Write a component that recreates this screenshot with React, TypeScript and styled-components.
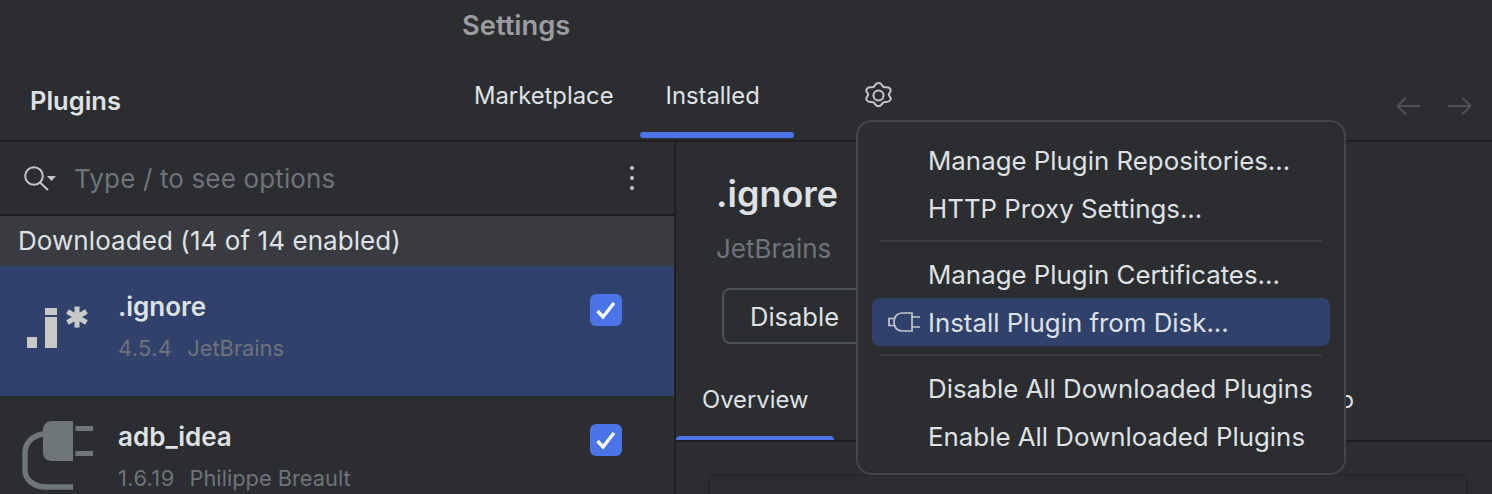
import React from "react";
import styled, { createGlobalStyle } from "styled-components";

const GlobalStyle = createGlobalStyle`
    html, body {
        margin: 0;
        padding: 0;
        background-color: #2b2d30;
    }
    * {
        box-sizing: border-box;
    }
`

const Page = styled.div`
    position: relative;
    width: 1492px;
    height: 494px;
    overflow: hidden;
    background-color: #2b2d30;
    color: #dfe1e5;
    font-family: Inter, "Liberation Sans", sans-serif;
    font-size: 23.8px;
`

const TitleBar = styled.div`
    height: 48px;
    padding-left: 462px;
    display: flex;
    align-items: center;
    padding-top: 2px;
    font-size: 27.3px;
    font-weight: 600;
    color: #9b9c9f;
`

const Header = styled.div`
    height: 94px;
    border-bottom: 2px solid #1e1f22;
    display: flex;
    padding-left: 30px;
`

const HeaderTitle = styled.div`
    width: 418px;
    padding-top: 38px;
    font-size: 25.5px;
    line-height: 30px;
    font-weight: 600;
`

const HeaderTab = styled.div<{ $active?: boolean }>`
    position: relative;
    height: 92px;
    padding: 33px ${(p) => (p.$active ? "34px" : "26px")} 0 26px;
    line-height: 30px;
    &::after {
        content: "";
        display: ${(p) => (p.$active ? "block" : "none")};
        position: absolute;
        left: 0;
        right: 0;
        bottom: 2px;
        height: 6px;
        border-radius: 4px;
        background-color: #4a74e8;
    }
`

const HeaderIcons = styled.div`
    flex: 1;
    display: flex;
    justify-content: space-between;
    padding: 34px 20px 0 71px;
`

const NavArrows = styled.div`
    display: flex;
    gap: 28px;
    padding-top: 14px;
    color: #4f5156;
`

const Body = styled.div`
    display: flex;
    height: 352px;
`

const LeftPanel = styled.div`
    width: 676px;
    flex-shrink: 0;
    border-right: 2px solid #1e1f22;
`

const SearchRow = styled.div`
    height: 74px;
    padding: 0 39px 0 24px;
    display: flex;
    align-items: center;
    border-bottom: 2px solid #1e1f22;
`

const SearchText = styled.div`
    flex: 1;
    margin-left: 18px;
    font-size: 26px;
    letter-spacing: 0.15px;
    color: #6f737a;
`

const GroupHeader = styled.div`
    height: 50px;
    padding: 0 0 1px 18px;
    display: flex;
    align-items: center;
    font-size: 26px;
    letter-spacing: 0.07px;
    background-color: #393b40;
`

const PluginRow = styled.div<{ $selected?: boolean }>`
    height: 130px;
    padding: 26px 52px 0 14px;
    display: flex;
    align-items: flex-start;
    background-color: ${(p) => (p.$selected ? "#30426b" : "transparent")};
`

const PluginIconBox = styled.div`
    width: 104px;
    margin-top: -2px;
    flex-shrink: 0;
`

const PluginText = styled.div`
    flex: 1;
`

const PluginName = styled.div`
    line-height: 30px;
    font-size: 26px;
    font-weight: 600;
`

const PluginMeta = styled.div`
    margin-top: 11px;
    line-height: 30px;
    font-size: 21.8px;
    color: #6f737a;
    display: flex;
    gap: 15px;
`

const PluginVersion = styled.span`
    letter-spacing: 0.4px;
`

const CheckBox = styled.div`
    width: 32px;
    height: 32px;
    margin-top: 2px;
    border-radius: 6px;
    background-color: #4a74e8;
    display: flex;
    align-items: center;
    justify-content: center;
`

const DetailPanel = styled.div`
    flex: 1;
`

const DetailName = styled.div`
    padding: 31px 0 0 40px;
    font-size: 36px;
    line-height: 42px;
    font-weight: 600;
`

const DetailVendor = styled.div`
    padding: 19px 0 0 40px;
    line-height: 30px;
    font-size: 26px;
    color: #6f737a;
`

const DisableButton = styled.div`
    width: 200px;
    height: 56px;
    margin: 24px 0 0 46px;
    padding-left: 26px;
    display: flex;
    align-items: center;
    font-size: 25.5px;
    border: 2px solid #4e5157;
    border-radius: 8px;
`

const DetailTabs = styled.div`
    height: 98px;
    padding-right: 112px;
    border-bottom: 2px solid #1e1f22;
    display: flex;
    justify-content: space-between;
`

const DetailTab = styled.div<{ $active?: boolean }>`
    position: relative;
    height: 96px;
    padding: 41px 26px 0;
    line-height: 30px;
    &::after {
        content: "";
        display: ${(p) => (p.$active ? "block" : "none")};
        position: absolute;
        left: 0;
        right: 0;
        bottom: 0;
        height: 4px;
        border-radius: 4px 4px 0 0;
        background-color: #4a74e8;
    }
`

const DescriptionBox = styled.div`
    width: 760px;
    height: 100px;
    margin: 32px 0 0 32px;
    border: 2px solid #26282b;
    border-radius: 8px;
`

const Menu = styled.div`
    position: absolute;
    left: 856px;
    top: 120px;
    width: 490px;
    height: 355px;
    padding: 14px;
    font-size: 25.85px;
    background-color: #2b2d30;
    border: 2px solid #43454a;
    border-radius: 16px;
`

const MenuItem = styled.div<{ $active?: boolean }>`
    height: 48px;
    padding-left: 16px;
    display: flex;
    align-items: center;
    border-radius: 8px;
    background-color: ${(p) => (p.$active ? "#30426b" : "transparent")};
`

const MenuIcon = styled.div`
    width: 40px;
    flex-shrink: 0;
    display: flex;
`

const MenuSeparator = styled.div`
    height: 2px;
    margin: 8px;
    background-color: #393b40;
`

const GearIcon = () => (
    <svg width="27" height="27" viewBox="2.75 0.5 22.5 27" preserveAspectRatio="none" fill="none" stroke="#c4c6cb" strokeLinejoin="round">
        <path vectorEffect="non-scaling-stroke" strokeWidth="2" d="M14 1.5c1.2 0 2.1.7 2.7 1.8l.7 1.3c.4.7 1.1 1.1 1.9 1.1h1.5c1.3 0 2.3.6 2.9 1.7.6 1 .6 2.2 0 3.3l-.8 1.3c-.4.7-.4 1.5 0 2.2l.8 1.3c.6 1.1.6 2.3 0 3.3-.6 1.1-1.6 1.7-2.9 1.7h-1.5c-.8 0-1.5.4-1.9 1.1l-.7 1.3c-.6 1.1-1.5 1.8-2.7 1.8s-2.1-.7-2.7-1.8l-.7-1.3c-.4-.7-1.1-1.1-1.9-1.1H7.2c-1.3 0-2.3-.6-2.9-1.7-.6-1-.6-2.2 0-3.3l.8-1.3c.4-.7.4-1.5 0-2.2l-.8-1.3c-.6-1.1-.6-2.3 0-3.3.6-1.1 1.6-1.7 2.9-1.7h1.5c.8 0 1.5-.4 1.9-1.1l.7-1.3c.6-1.1 1.5-1.8 2.7-1.8z" />
        <ellipse vectorEffect="non-scaling-stroke" strokeWidth="2" cx="14" cy="14" rx="4.2" ry="5" />
    </svg>
)

const Arrow = ({ flip }: { flip?: boolean }) => (
    <svg width="24" height="20" viewBox="0 0 24 20" fill="none" stroke="currentColor" strokeWidth="2" style={flip ? { transform: "scaleX(-1)" } : undefined}>
        <path d="M24 10H2M10 1.5L1.5 10l8.5 8.5" />
    </svg>
)

const SearchIcon = () => (
    <svg width="32" height="26" viewBox="0 0 32 26" fill="none">
        <circle cx="10" cy="11" r="8.8" stroke="#c4c6cb" strokeWidth="2" />
        <path d="M16 17.5l8 7.5" stroke="#c4c6cb" strokeWidth="2" />
        <path d="M23 11h9l-4.5 5z" fill="#c4c6cb" />
    </svg>
)

const MoreIcon = () => (
    <svg width="6" height="26" viewBox="0 0 6 26" fill="#c4c6cb">
        <circle cx="3" cy="3" r="2" />
        <circle cx="3" cy="13" r="2" />
        <circle cx="3" cy="23" r="2" />
    </svg>
)

const CheckIcon = () => (
    <svg width="24" height="24" viewBox="0 0 24 24" fill="none" stroke="#fff" strokeWidth="3.4">
        <path d="M3.5 13l5.5 6L20 5" />
    </svg>
)

const IgnoreIcon = () => (
    <svg width="84" height="74" viewBox="0 0 84 74" fill="#c9c9c9">
        <rect x="13" y="47" width="10" height="11" />
        <rect x="31" y="18" width="12" height="7" />
        <rect x="31" y="27" width="12" height="31" />
        <path d="M63 16.5v21M53.5 21.5l19 11M72.5 21.5l-19 11" stroke="#c9c9c9" strokeWidth="5" />
    </svg>
)

const AdbIcon = () => (
    <svg width="84" height="74" viewBox="0 0 84 74" fill="#6e767a">
        <path d="M59 1H38C32 1 29 5 29 10V32C29 37 32 41 38 41H59z" />
        <rect x="61.5" y="6" width="17.5" height="5" />
        <rect x="61.5" y="31" width="17.5" height="5" />
        <path d="M29 14C17 16 11 24 11 33V50C11 60 20 67 32 67H59" fill="none" stroke="#6e767a" strokeWidth="5.5" />
    </svg>
)

const PlugIcon = () => (
    <svg width="32" height="20" viewBox="0 0 32 20" fill="none" stroke="#c4c6cb" strokeWidth="1.7">
        <path d="M24 1H14C9 1 6 5 6 10s3 9 8 9h10z" />
        <path d="M6 6.5H1v7h5M24 5h8M24 15h8" />
    </svg>
)

const plugins = [
    { name: ".ignore", version: "4.5.4", vendor: "JetBrains", icon: <IgnoreIcon />, selected: true },
    { name: "adb_idea", version: "1.6.19", vendor: "Philippe Breault", icon: <AdbIcon />, selected: false },
]

const App = () => {
    return (
        <Page>
            <GlobalStyle />
            <TitleBar>Settings</TitleBar>
            <Header>
                <HeaderTitle>Plugins</HeaderTitle>
                <HeaderTab>Marketplace</HeaderTab>
                <HeaderTab $active>Installed</HeaderTab>
                <HeaderIcons>
                    <GearIcon />
                    <NavArrows>
                        <Arrow />
                        <Arrow flip />
                    </NavArrows>
                </HeaderIcons>
            </Header>
            <Body>
                <LeftPanel>
                    <SearchRow>
                        <SearchIcon />
                        <SearchText>Type / to see options</SearchText>
                        <MoreIcon />
                    </SearchRow>
                    <GroupHeader>Downloaded (14 of 14 enabled)</GroupHeader>
                    {plugins.map((plugin) => (
                        <PluginRow $selected={plugin.selected} key={plugin.name}>
                            <PluginIconBox>{plugin.icon}</PluginIconBox>
                            <PluginText>
                                <PluginName>{plugin.name}</PluginName>
                                <PluginMeta>
                                    <PluginVersion>{plugin.version}</PluginVersion>
                                    <span>{plugin.vendor}</span>
                                </PluginMeta>
                            </PluginText>
                            <CheckBox>
                                <CheckIcon />
                            </CheckBox>
                        </PluginRow>
                    ))}
                </LeftPanel>
                <DetailPanel>
                    <DetailName>.ignore</DetailName>
                    <DetailVendor>JetBrains</DetailVendor>
                    <DisableButton>Disable</DisableButton>
                    <DetailTabs>
                        <DetailTab $active>Overview</DetailTab>
                        <DetailTab>Additional Info</DetailTab>
                    </DetailTabs>
                    <DescriptionBox />
                </DetailPanel>
            </Body>
            <Menu>
                <MenuItem><MenuIcon />Manage Plugin Repositories...</MenuItem>
                <MenuItem><MenuIcon />HTTP Proxy Settings...</MenuItem>
                <MenuSeparator />
                <MenuItem><MenuIcon />Manage Plugin Certificates...</MenuItem>
                <MenuItem $active><MenuIcon><PlugIcon /></MenuIcon>Install Plugin from Disk...</MenuItem>
                <MenuSeparator />
                <MenuItem><MenuIcon />Disable All Downloaded Plugins</MenuItem>
                <MenuItem><MenuIcon />Enable All Downloaded Plugins</MenuItem>
            </Menu>
        </Page>
    )
}

export default App
